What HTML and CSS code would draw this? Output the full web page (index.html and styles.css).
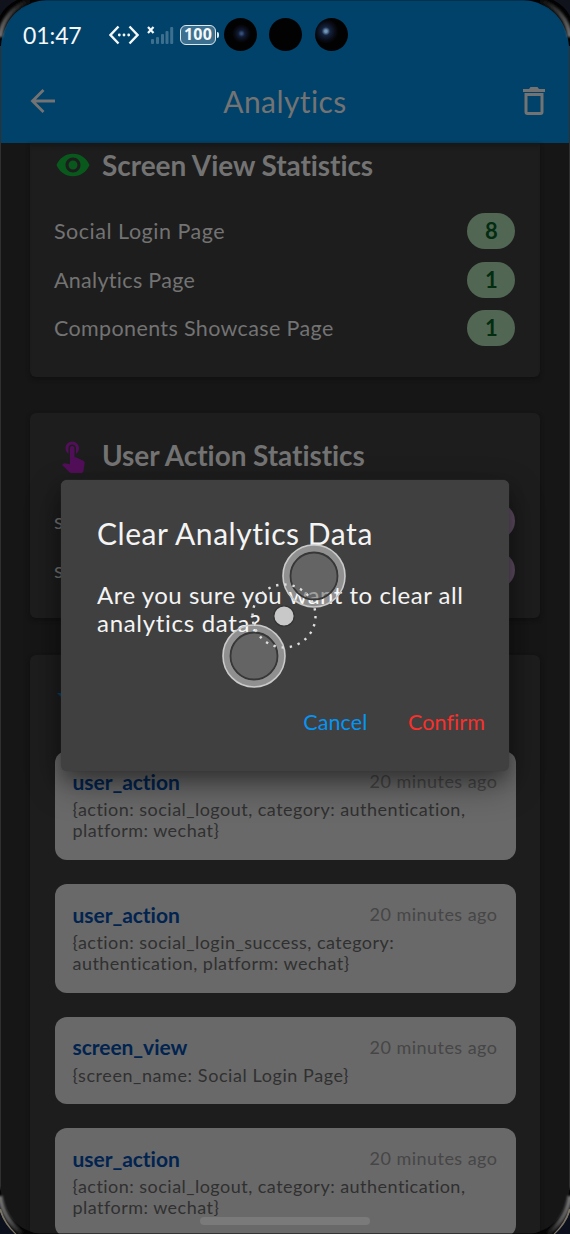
FILE: index.html
```html
<!DOCTYPE html>
<html lang="en">
<head>
<meta charset="utf-8">
<title>Analytics</title>
<link rel="stylesheet" href="styles.css">
</head>
<body>
<div class="phone">
  <header class="header">
    <div class="status">
      <span class="clock">01:47</span>
      <svg class="debug" width="30" height="20" viewBox="0 0 30 20" fill="none" stroke="#f4f8fa" stroke-width="2.4"><path d="M9.5 1.500 1.500 10l8 8.500M20.500 1.500l8 8.500-8 8.500"/><g fill="#f4f8fa" stroke="none"><circle cx="10.300" cy="10" r="1.400"/><circle cx="15" cy="10" r="1.400"/><circle cx="19.700" cy="10" r="1.400"/></g></svg>
      <svg class="signal" width="27" height="18" viewBox="0 0 27 18"><path d="M1 1l5.500 6M6.500 1 1 7" stroke="#f4f8fa" stroke-width="2.200"/><g fill="#3d708f"><rect x="4" y="13" width="3" height="5" rx="1"/><rect x="9" y="11" width="3" height="7" rx="1"/><rect x="14" y="8" width="3" height="10" rx="1"/><rect x="18.500" y="5" width="3" height="13" rx="1"/><rect x="23.200" y="1" width="3" height="17" rx="1"/></g></svg>
      <span class="battery">100</span><span class="battery-tip"></span>
      <div class="lenses"><i class="lens lens-a"></i><i class="lens"></i><i class="lens lens-b"></i></div>
    </div>
    <div class="appbar">
      <svg width="26" height="24" viewBox="0 0 26 24" fill="none" stroke="#737373" stroke-width="2.800"><path d="M25 12H2.500M13.500 1 2.500 12l11 11"/></svg>
      <h1 class="page-title">Analytics</h1>
      <svg width="22" height="28" viewBox="0 0 22 28" fill="#737373"><path d="M0 2h6l1.500-2h7L16 2h6v3H0z"/><path fill-rule="evenodd" d="M1.500 6h19v19a3 3 0 0 1-3 3h-13a3 3 0 0 1-3-3zM4.500 9v16h13V9z"/></svg>
    </div>
  </header>

  <main class="content">
    <section class="card card-views">
      <div class="card-head">
        <svg class="head-icon" width="36" height="36" viewBox="0 0 24 24" fill="#09591d"><path d="M12 4.500C7 4.500 2.730 7.610 1 12c1.730 4.390 6 7.500 11 7.500s9.270-3.110 11-7.500c-1.730-4.390-6-7.500-11-7.500zM12 17c-2.760 0-5-2.240-5-5s2.240-5 5-5 5 2.240 5 5-2.240 5-5 5zm0-8c-1.660 0-3 1.340-3 3s1.340 3 3 3 3-1.340 3-3-1.340-3-3-3z"/></svg>
        <h2 class="card-title">Screen View Statistics</h2>
      </div>
      <div class="row"><span class="wide">Social Login Page</span><b class="count">8</b></div>
      <div class="row"><span class="narrow">Analytics Page</span><b class="count">1</b></div>
      <div class="row"><span>Components Showcase Page</span><b class="count">1</b></div>
    </section>

    <section class="card card-actions">
      <div class="card-head">
        <svg class="head-icon" width="36" height="36" viewBox="0 0 24 24" fill="#520f59"><path d="M9 11.240V7.500C9 6.120 10.120 5 11.500 5S14 6.120 14 7.500v3.740c1.210-.81 2-2.180 2-3.740C16 5.010 13.990 3 11.500 3S7 5.010 7 7.500c0 1.560.79 2.930 2 3.740zm9.840 4.630-4.540-2.260c-.17-.07-.35-.11-.54-.11H13v-6c0-.83-.67-1.500-1.500-1.500S10 6.670 10 7.500v10.740l-3.430-.72c-.08-.01-.15-.03-.24-.03-.31 0-.59.13-.79.33l-.79.800 4.940 4.940c.27.27.65.44 1.060.44h6.790c.75 0 1.330-.55 1.440-1.280l.75-5.270c.01-.07.02-.14.02-.2 0-.62-.38-1.160-.91-1.380z"/></svg>
        <h2 class="card-title">User Action Statistics</h2>
      </div>
      <div class="row"><span>s</span><b class="count count-purple"></b></div>
      <div class="row"><span>s</span><b class="count count-purple"></b></div>
    </section>

    <section class="card card-events">
      <div class="card-head"><svg class="head-icon" width="36" height="36" viewBox="0 0 36 36" fill="#01426a"><path d="M2 14h32L18 30z"/></svg></div>
      <article class="event"><div class="event-head"><b>user_action</b><time>20 minutes ago</time></div><p>{action: social_logout, category: authentication,<br>platform: wechat}</p></article>
      <article class="event"><div class="event-head"><b>user_action</b><time>20 minutes ago</time></div><p>{action: social_login_success, category:<br>authentication, platform: wechat}</p></article>
      <article class="event"><div class="event-head"><b>screen_view</b><time>20 minutes ago</time></div><p class="wider">{screen_name: Social Login Page}</p></article>
      <article class="event"><div class="event-head"><b>user_action</b><time>20 minutes ago</time></div><p>{action: social_logout, category: authentication,<br>platform: wechat}</p></article>
    </section>
  </main>

  <div class="dialog" role="dialog">
    <h3 class="dialog-title">Clear Analytics Data</h3>
    <p class="dialog-text">Are you sure you want to clear all<br><span class="wider">analytics data?</span></p>
    <div class="dialog-actions"><span class="cancel">Cancel</span><span class="confirm">Confirm</span></div>
  </div>

  <svg class="touch" width="126" height="146" viewBox="221 543 126 146" fill="none">
    <g id="finger"><circle cx="314" cy="576" r="27.500" stroke="#fff" stroke-opacity=".42" stroke-width="7"/><circle cx="314" cy="576" r="31" stroke="#cacaca" stroke-width="1.600"/><circle cx="314" cy="576" r="23.500" fill="#767676" fill-opacity=".67" stroke="#373737" stroke-width="1.800"/></g>
    <use href="#finger" x="-60" y="80"/>
    <circle cx="284" cy="616" r="31.500" stroke="#dedede" stroke-width="2.400" stroke-dasharray="2.400 5.847"/>
    <circle cx="284" cy="616" r="10.200" fill="#c8c8c8" stroke="#333" stroke-width="1.200"/>
  </svg>

  <div class="home-bar"></div>

  <svg class="bezel" width="570" height="1234" viewBox="0 0 570 1234" fill="none">
    <defs>
      <linearGradient id="metal" gradientUnits="userSpaceOnUse" x1="0" y1="40" x2="30" y2="0"><stop offset="0" stop-color="#777"/><stop offset=".5" stop-color="#444"/><stop offset="1" stop-color="#080808"/></linearGradient>
      <linearGradient id="rim" gradientUnits="userSpaceOnUse" x1="0" y1="1195" x2="22" y2="1234"><stop offset="0" stop-color="#777"/><stop offset=".6" stop-color="#555"/><stop offset="1" stop-color="#111"/></linearGradient>
      <filter id="soft" x="-20%" y="-20%" width="140%" height="140%"><feGaussianBlur stdDeviation=".9"/></filter>
      <g id="top-corner"><path d="M0 0h46C20 2 3 20 1 46H0z" fill="#020202"/><path d="M0 37C2 20 13 7 30 0" stroke="url(#metal)" stroke-width="5" filter="url(#soft)"/><path d="M0 0h17Q5 6 0 16z" fill="#11131c"/></g>
      <g id="bottom-corner"><path d="M0 1186c3 25 14 43 39 48H0z" fill="#050505"/><path d="M0 1196c2 16 10 28 22 38" stroke="url(#rim)" stroke-width="5" filter="url(#soft)"/><path d="M0 1209q4 15 17 27" stroke="#7b7466" stroke-width="2.200"/><path d="M0 1212q4 12 15 22H0z" fill="#0c101c"/></g>
    </defs>
    <path d="M.5 45v1145M569.500 45v1145" stroke="#303030"/>
    <path d="M40 .5h490" stroke="#02304d"/>
    <path d="M30 1233.500h510" stroke="#000" stroke-opacity=".5"/>
    <use href="#top-corner"/><use href="#top-corner" transform="matrix(-1 0 0 1 570 0)"/>
    <use href="#bottom-corner"/><use href="#bottom-corner" transform="matrix(-1 0 0 1 570 0)"/>
  </svg>
</div>
</body>
</html>
```
FILE: styles.css
```css
* { box-sizing: border-box; }
body { margin: 0; background: #161616; }
h1, h2, h3, p { margin: 0; font-weight: 400; }

.phone {
  position: relative;
  width: 570px;
  height: 1234px;
  overflow: hidden;
  background: #161616;
  color: #737373;
  font-family: Lato, sans-serif;
  white-space: nowrap;
}

/* header */
.header { height: 143px; background: #01426a; }
.status { display: flex; align-items: center; height: 70px; padding-left: 23px; color: #f4f8fa; }
.clock { width: 86px; margin-top: -1px; font-size: 23px; letter-spacing: -.1px; }
.debug { margin-right: 8px; }
.signal { margin-right: 6px; }
.battery {
  width: 36px; height: 20px; border: 1.5px solid #dfe8ed; border-radius: 6px;
  background: #3d708f; text-align: center; font: 700 16px/17px "Open Sans", sans-serif; letter-spacing: .2px;
}
.battery-tip { width: 2px; height: 6px; margin-left: 1px; border-radius: 0 2px 2px 0; background: #dfe8ed; }
.lenses { display: flex; gap: 12.5px; margin: -1px 0 0 4.5px; }
.lens { width: 33px; height: 33px; border-radius: 50%; background: #020202; }
.lens-a { background: radial-gradient(circle at 53% 47%, #35527c 0 3%, #101a33 14%, #080b14 28%, #020202 38%); }
.lens-b { background: radial-gradient(circle at 33% 40%, #7296b8 0 4%, #14233f 14%, #090d18 30%, #020202 42%); }
.appbar { display: flex; align-items: center; justify-content: space-between; height: 62px; padding: 0 25px 0 30px; }
.page-title { padding-right: 9px; font-size: 30px; line-height: 40px; letter-spacing: .4px; }

/* cards */
.content { display: flex; flex-direction: column; padding: 0 30px; }
.card { padding: 0 24px; background: #1d1d1d; box-shadow: 0 2px 4px #101010; }
.card-views { height: 234px; padding-top: 4px; margin-bottom: 36px; border-radius: 0 0 6px 6px; box-shadow: 0 2px 4px #101010, inset 0 6px 5px -4px #151515; }
.card-actions { height: 205px; padding-top: 24px; margin-bottom: 37px; border-radius: 6px; }
.card-events { padding-top: 24px; border-radius: 6px; }
.card-head { display: flex; align-items: center; gap: 12px; height: 36px; margin-bottom: 24px; }
.head-icon { position: relative; left: .5px; }
.card-title { font-size: 28px; font-weight: 700; letter-spacing: -.07px; }
.row { display: flex; align-items: center; justify-content: space-between; height: 48.5px; padding-right: .6px; font-size: 21.5px; letter-spacing: .36px; }
.wide { letter-spacing: .52px; }
.narrow { letter-spacing: .3px; }
.count {
  width: 48px; height: 36px; border-radius: 18px; background: #526654; color: #032d10;
  font-weight: 700; font-size: 22px; line-height: 36px; text-align: center; letter-spacing: 0;
}
.count-purple { background: #5f4c63; }

/* events */
.card-events .card-head { margin-bottom: 36.4px; }
.event { margin: 0 .5px 24.2px; padding: 16px 18px 18.5px; border-radius: 12px; background: #696969; color: #303030; }
.event-head { display: flex; align-items: center; justify-content: space-between; height: 28px; }
.event-head b { font-size: 21px; letter-spacing: -.05px; color: #012350; }
.event-head time { font-size: 18px; letter-spacing: .47px; color: #464646; }
.event p { padding-top: 4px; font-size: 18px; line-height: 21px; letter-spacing: .47px; }
.event .wider { letter-spacing: .58px; }

/* dialog */
.dialog {
  position: absolute; left: 61px; top: 480px; width: 448px; height: 291px;
  padding: 33px 24px 0 36px; border-radius: 6px; background: #404040; color: #f4f4f4;
  box-shadow: 0 14px 34px rgba(0, 0, 0, .4), 0 8px 16px rgba(0, 0, 0, .22), 0 0 1px #555;
}
.dialog-title { font-size: 30px; line-height: 40px; letter-spacing: .54px; }
.dialog-text { margin-top: 28px; font-size: 24px; line-height: 28px; letter-spacing: .51px; }
.dialog-text .wider { letter-spacing: .7px; }
.dialog-actions { display: flex; justify-content: flex-end; gap: 40.5px; margin-top: 71px; font-size: 21.5px; line-height: 28px; }
.cancel { color: #0694f2; letter-spacing: .1px; }
.confirm { color: #f9302b; letter-spacing: .1px; }

.touch { position: absolute; left: 221px; top: 543px; }
.home-bar { position: absolute; left: 200px; top: 1217px; width: 170px; height: 8px; border-radius: 4px; background: #7a7a7a; }
.bezel { position: absolute; left: 0; top: 0; }
```
